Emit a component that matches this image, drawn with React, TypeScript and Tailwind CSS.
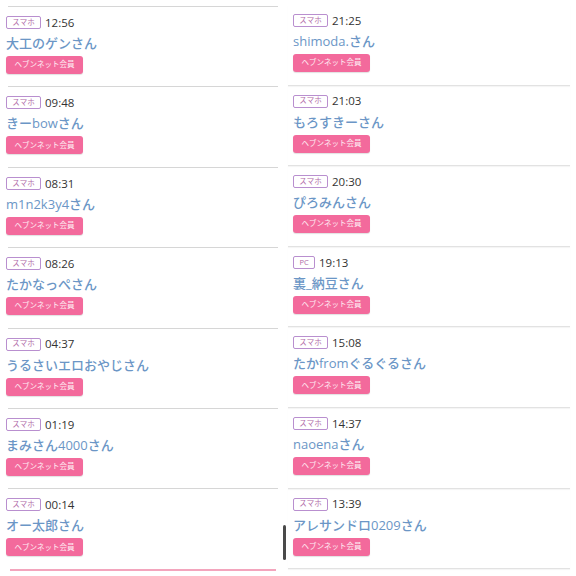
const LEFT = [
  { device: "スマホ", time: "12:56", name: "大工のゲンさん" },
  { device: "スマホ", time: "09:48", name: "きーbowさん" },
  { device: "スマホ", time: "08:31", name: "m1n2k3y4さん" },
  { device: "スマホ", time: "08:26", name: "たかなっぺさん" },
  { device: "スマホ", time: "04:37", name: "うるさいエロおやじさん" },
  { device: "スマホ", time: "01:19", name: "まみさん4000さん" },
  { device: "スマホ", time: "00:14", name: "オー太郎さん" },
];

const RIGHT = [
  { device: "スマホ", time: "21:25", name: "shimoda.さん" },
  { device: "スマホ", time: "21:03", name: "もろすきーさん" },
  { device: "スマホ", time: "20:30", name: "ぴろみんさん" },
  { device: "PC", time: "19:13", name: "裏_納豆さん" },
  { device: "スマホ", time: "15:08", name: "たかfromぐるぐるさん" },
  { device: "スマホ", time: "14:37", name: "naoenaさん" },
  { device: "スマホ", time: "13:39", name: "アレサンドロ0209さん" },
];

type Visit = { device: string; time: string; name: string };

function Entry({ v }: { v: Visit }) {
  return (
    <div className="flex flex-col items-start">
      <div className="flex items-center gap-[4px] h-[13px]">
        <span
          className={`flex h-[13px] items-center justify-center rounded-[2px] border border-[#b98fcf] text-[7.5px] leading-none text-[#b06aa8] ${
            v.device === "PC" ? "w-[22px]" : "w-[35px]"
          }`}
        >
          {v.device}
        </span>
        <span className="text-[11.5px] leading-none text-[#333]">{v.time}</span>
      </div>
      <div className="mt-[6px] text-[13px] leading-[16px] font-medium text-[#6b96c6] whitespace-nowrap">
        {v.name}
      </div>
      <div className="mt-[5px] flex h-[18px] w-[77px] items-center justify-center rounded-[3px] bg-[#f36a9c] text-[7.5px] leading-none text-white/90 shadow-[0_1px_1px_rgba(0,0,0,0.12)]">
        ヘブンネット会員
      </div>
    </div>
  );
}

export default function App() {
  return (
    <div
      className="flex h-[576px] w-[576px] overflow-hidden bg-white"
      style={{ fontFamily: '"Open Sans", "Noto Sans CJK JP", sans-serif' }}
    >
      <div className="relative w-[286px] pt-[6px]">
        {LEFT.map((v) => (
          <div key={v.time} className="mx-[8px] h-[80.4px] border-t border-[#d6d6d6] pt-[9px]">
            <div className="-ml-[2px]">
              <Entry v={v} />
            </div>
          </div>
        ))}
        <div className="mx-[10px] h-[2px] bg-[#f3a5bd]" />
        <div className="absolute left-[283px] top-[525px] h-[35px] w-[3px] rounded-full bg-[#4a4a4a]" />
      </div>
      <div className="w-[290px] pt-[5px]">
        {RIGHT.map((v) => (
          <div
            key={v.time}
            className="mr-[6px] ml-[2px] h-[80.6px] border-b border-[#e2e2e2] pt-[9px] pl-[5px] shadow-[0_1px_1px_rgba(0,0,0,0.04)]"
          >
            <Entry v={v} />
          </div>
        ))}
      </div>
    </div>
  );
}
